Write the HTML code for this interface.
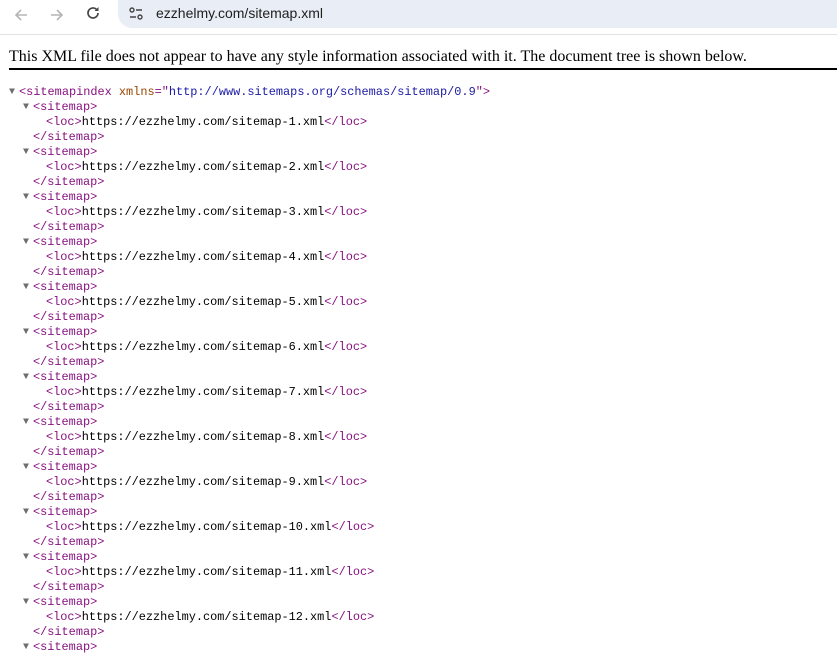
<!DOCTYPE html>
<html><head><style>
body{margin:0;width:837px;height:647px;overflow:hidden;background:#fff;position:relative}
.bar{position:absolute;left:0;top:0;width:837px;height:34px;background:#fff;border-bottom:1px solid #dfe1e5}
.pill{position:absolute;left:118px;top:0;width:719px;height:28px;background:#e9eef6;border-radius:0 0 0 14px}
.url{position:absolute;left:156px;top:5px;font:14px "Liberation Sans",sans-serif;color:#1f1f1f}
.hdr{position:absolute;left:9px;top:48px;font:16px "Liberation Serif",serif;color:#000}
.rule{position:absolute;left:9px;top:68px;width:828px;height:2px;background:#000}
.tree{position:absolute;left:0;top:85px;width:837px;font:11.9px/15px "Liberation Mono",monospace;white-space:nowrap}
.l{height:15px;position:relative}
.l>span{position:absolute;white-space:pre}
.t{color:#881280}.a{color:#994500}.v{color:#1a1aa6}
.l>.ar{color:#6e6e6e;font-size:10px;top:0}
</style></head><body>
<div class="bar">
<svg style="position:absolute;left:12px;top:6px" width="18" height="18" viewBox="0 0 18 18"><path d="M15 9H4M9 4L4 9l5 5" stroke="#b5b5b5" stroke-width="1.6" fill="none"/></svg>
<svg style="position:absolute;left:48px;top:6px" width="18" height="18" viewBox="0 0 18 18"><path d="M3 9h11M9 4l5 5-5 5" stroke="#b5b5b5" stroke-width="1.6" fill="none"/></svg>
<svg style="position:absolute;left:84px;top:4px" width="18" height="18" viewBox="0 0 18 18"><path d="M14 9a5 5 0 1 1-1.6-3.7" stroke="#444" stroke-width="1.7" fill="none"/><path d="M14.5 3v4h-4z" fill="#444"/></svg>
<div class="pill"></div>
<svg style="position:absolute;left:127px;top:5px" width="18" height="18" viewBox="0 0 18 18"><circle cx="5" cy="5" r="2" stroke="#444" stroke-width="1.4" fill="none"/><path d="M9 5h6M3 12h6" stroke="#444" stroke-width="1.4"/><circle cx="13" cy="12" r="2" stroke="#444" stroke-width="1.4" fill="none"/></svg>
<div class="url">ezzhelmy.com/sitemap.xml</div>
</div>
<div class="hdr">This XML file does not appear to have any style information associated with it. The document tree is shown below.</div>
<div class="rule"></div>
<div class="tree" id="tree"></div>
<script>
var h='<div class="l"><span class="ar" style="left:9px">▼</span><span style="left:19px"><span class="t">&lt;sitemapindex</span> <span class="a">xmlns</span><span class="t">="</span><span class="v">http://www.sitemaps.org/schemas/sitemap/0.9</span><span class="t">"&gt;</span></span></div>';
for(var i=1;i<=13;i++){h+='<div class="l"><span class="ar" style="left:23px">▼</span><span class="t" style="left:33px">&lt;sitemap&gt;</span></div>';
if(i<13){h+='<div class="l"><span style="left:46px"><span class="t">&lt;loc&gt;</span>https://ezzhelmy.com/sitemap-'+i+'.xml<span class="t">&lt;/loc&gt;</span></span></div>';
h+='<div class="l"><span class="t" style="left:33px">&lt;/sitemap&gt;</span></div>';}}
document.getElementById('tree').innerHTML=h;
</script>
</body></html>
